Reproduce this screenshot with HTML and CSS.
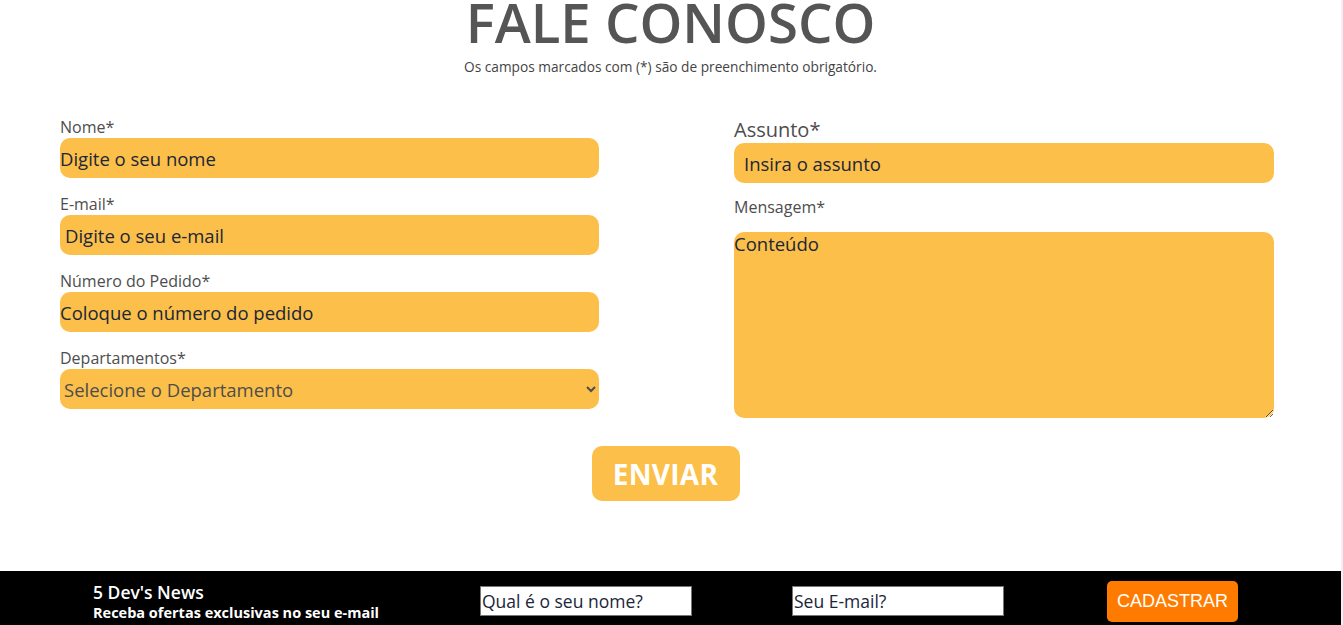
FILE: index.html
```html
<!DOCTYPE html>
<html lang="pt-BR">
<head>
<meta charset="utf-8">
<title>Fale Conosco</title>
<link rel="stylesheet" href="styles.css">
</head>
<body>
<main class="page">
  <h1 class="title">FALE CONOSCO</h1>
  <p class="subtitle">Os campos marcados com (*) são de preenchimento obrigatório.</p>
  <form class="form">
    <div class="cols">
      <div class="col">
        <label class="field">
          <span class="label">Nome*</span>
          <input class="input" type="text" placeholder="Digite o seu nome">
        </label>
        <label class="field">
          <span class="label">E-mail*</span>
          <input class="input input-pad" type="email" placeholder="Digite o seu e-mail">
        </label>
        <label class="field">
          <span class="label">Número do Pedido*</span>
          <input class="input" type="text" placeholder="Coloque o número do pedido">
        </label>
        <label class="field">
          <span class="label">Departamentos*</span>
          <select class="select">
            <option>Selecione o Departamento</option>
          </select>
        </label>
      </div>
      <div class="col">
        <label class="field">
          <span class="label label-big">Assunto*</span>
          <input class="input input-pad10" type="text" placeholder="Insira o assunto">
        </label>
        <label class="field field-msg">
          <span class="label">Mensagem*</span>
          <textarea class="textarea" placeholder="Conteúdo"></textarea>
        </label>
      </div>
    </div>
    <div class="actions">
      <button class="send" type="button">ENVIAR</button>
    </div>
  </form>
</main>
<footer class="news">
  <div class="news-text">
    <div class="news-title">5 Dev's News</div>
    <div class="news-sub">Receba ofertas exclusivas no seu e-mail</div>
  </div>
  <input class="news-input" type="text" placeholder="Qual é o seu nome?">
  <input class="news-input news-input2" type="email" placeholder="Seu E-mail?">
  <button class="news-btn" type="button">CADASTRAR</button>
</footer>
</body>
</html>
```

FILE: styles.css
```css
html, body {
  margin: 0;
  padding: 0;
  background: #fff;
}
body {
  font-family: "Open Sans", "Liberation Sans", sans-serif;
  color: #555;
  border-right: 2px solid #f1f1f1;
  overflow: hidden;
}
.title {
  margin: 0;
  text-align: center;
  font-size: 54.5px;
  line-height: 44px;
  font-weight: 600;
  color: #555;
}
.subtitle {
  margin: 14px 0 0;
  text-align: center;
  font-size: 13.7px;
  line-height: 18px;
  font-weight: 400;
  color: #444;
}
.form {
  margin-top: 40px;
}
.cols {
  display: grid;
  grid-template-columns: 539px 540px;
  column-gap: 135px;
  padding-left: 60px;
}
.col {
  display: flex;
  flex-direction: column;
  gap: 15px;
}
.field {
  display: flex;
  flex-direction: column;
}
.label {
  font-size: 16px;
  line-height: 22px;
  font-weight: 500;
  color: #4d4d4d;
}
.label-big {
  font-size: 20px;
  line-height: 27px;
}
.field-msg .label {
  margin-top: -2px;
  padding-bottom: 14px;
}
.input, .select, .textarea {
  box-sizing: border-box;
  width: 100%;
  height: 40px;
  border: none;
  border-radius: 10px;
  background: #fcbf49;
  font-family: "Open Sans", "Liberation Sans", sans-serif;
  font-size: 18.5px;
  font-weight: 400;
  color: #1b2638;
  padding: 0;
  margin: 0;
  outline: none;
}
.input::placeholder, .textarea::placeholder {
  color: #1b2638;
  opacity: 1;
}
.input-pad { padding-left: 5px; }
.input-pad10 { padding-left: 10px; }
.select {
  padding-left: 0;
  color: #4d4d4d;
}
.textarea {
  height: 186px;
  resize: vertical;
  line-height: 24px;
  padding-top: 0;
}
.actions {
  display: flex;
  justify-content: center;
  margin-top: 28px;
  padding-right: 10px;
}
.send {
  width: 148px;
  height: 55px;
  border: none;
  border-radius: 10px;
  background: #fcbf49;
  color: #fff;
  font-family: "Open Sans", "Liberation Sans", sans-serif;
  font-size: 28px;
  font-weight: 700;
  letter-spacing: 0.3px;
  padding: 0;
}
.news {
  margin-top: 70px;
  background: #000;
  height: 80px;
  display: flex;
  align-items: flex-start;
  padding-left: 93px;
  margin-right: -2px;
}
.news-text {
  width: 387px;
  padding-top: 10px;
  color: #fff;
}
.news-title {
  font-size: 17.5px;
  line-height: 22px;
  font-weight: 600;
}
.news-sub {
  font-size: 14.5px;
  line-height: 20px;
  font-weight: 700;
}
.news-input {
  box-sizing: border-box;
  width: 212px;
  height: 30px;
  margin-top: 15px;
  border: 1px solid #767676;
  background: #fff;
  padding: 0 1px;
  font-family: "Open Sans", "Liberation Sans", sans-serif;
  font-size: 17.5px;
  font-weight: 400;
  color: #1b2638;
  outline: none;
}
.news-input::placeholder {
  color: #1b2638;
  opacity: 1;
}
.news-input2 {
  margin-left: 100px;
}
.news-btn {
  margin-left: 103px;
  margin-top: 10px;
  width: 131px;
  height: 41px;
  border: none;
  border-radius: 5px;
  background: #ff7b00;
  color: #fff;
  font-family: "Liberation Sans", Arial, sans-serif;
  font-size: 18px;
  padding: 0;
}
```
